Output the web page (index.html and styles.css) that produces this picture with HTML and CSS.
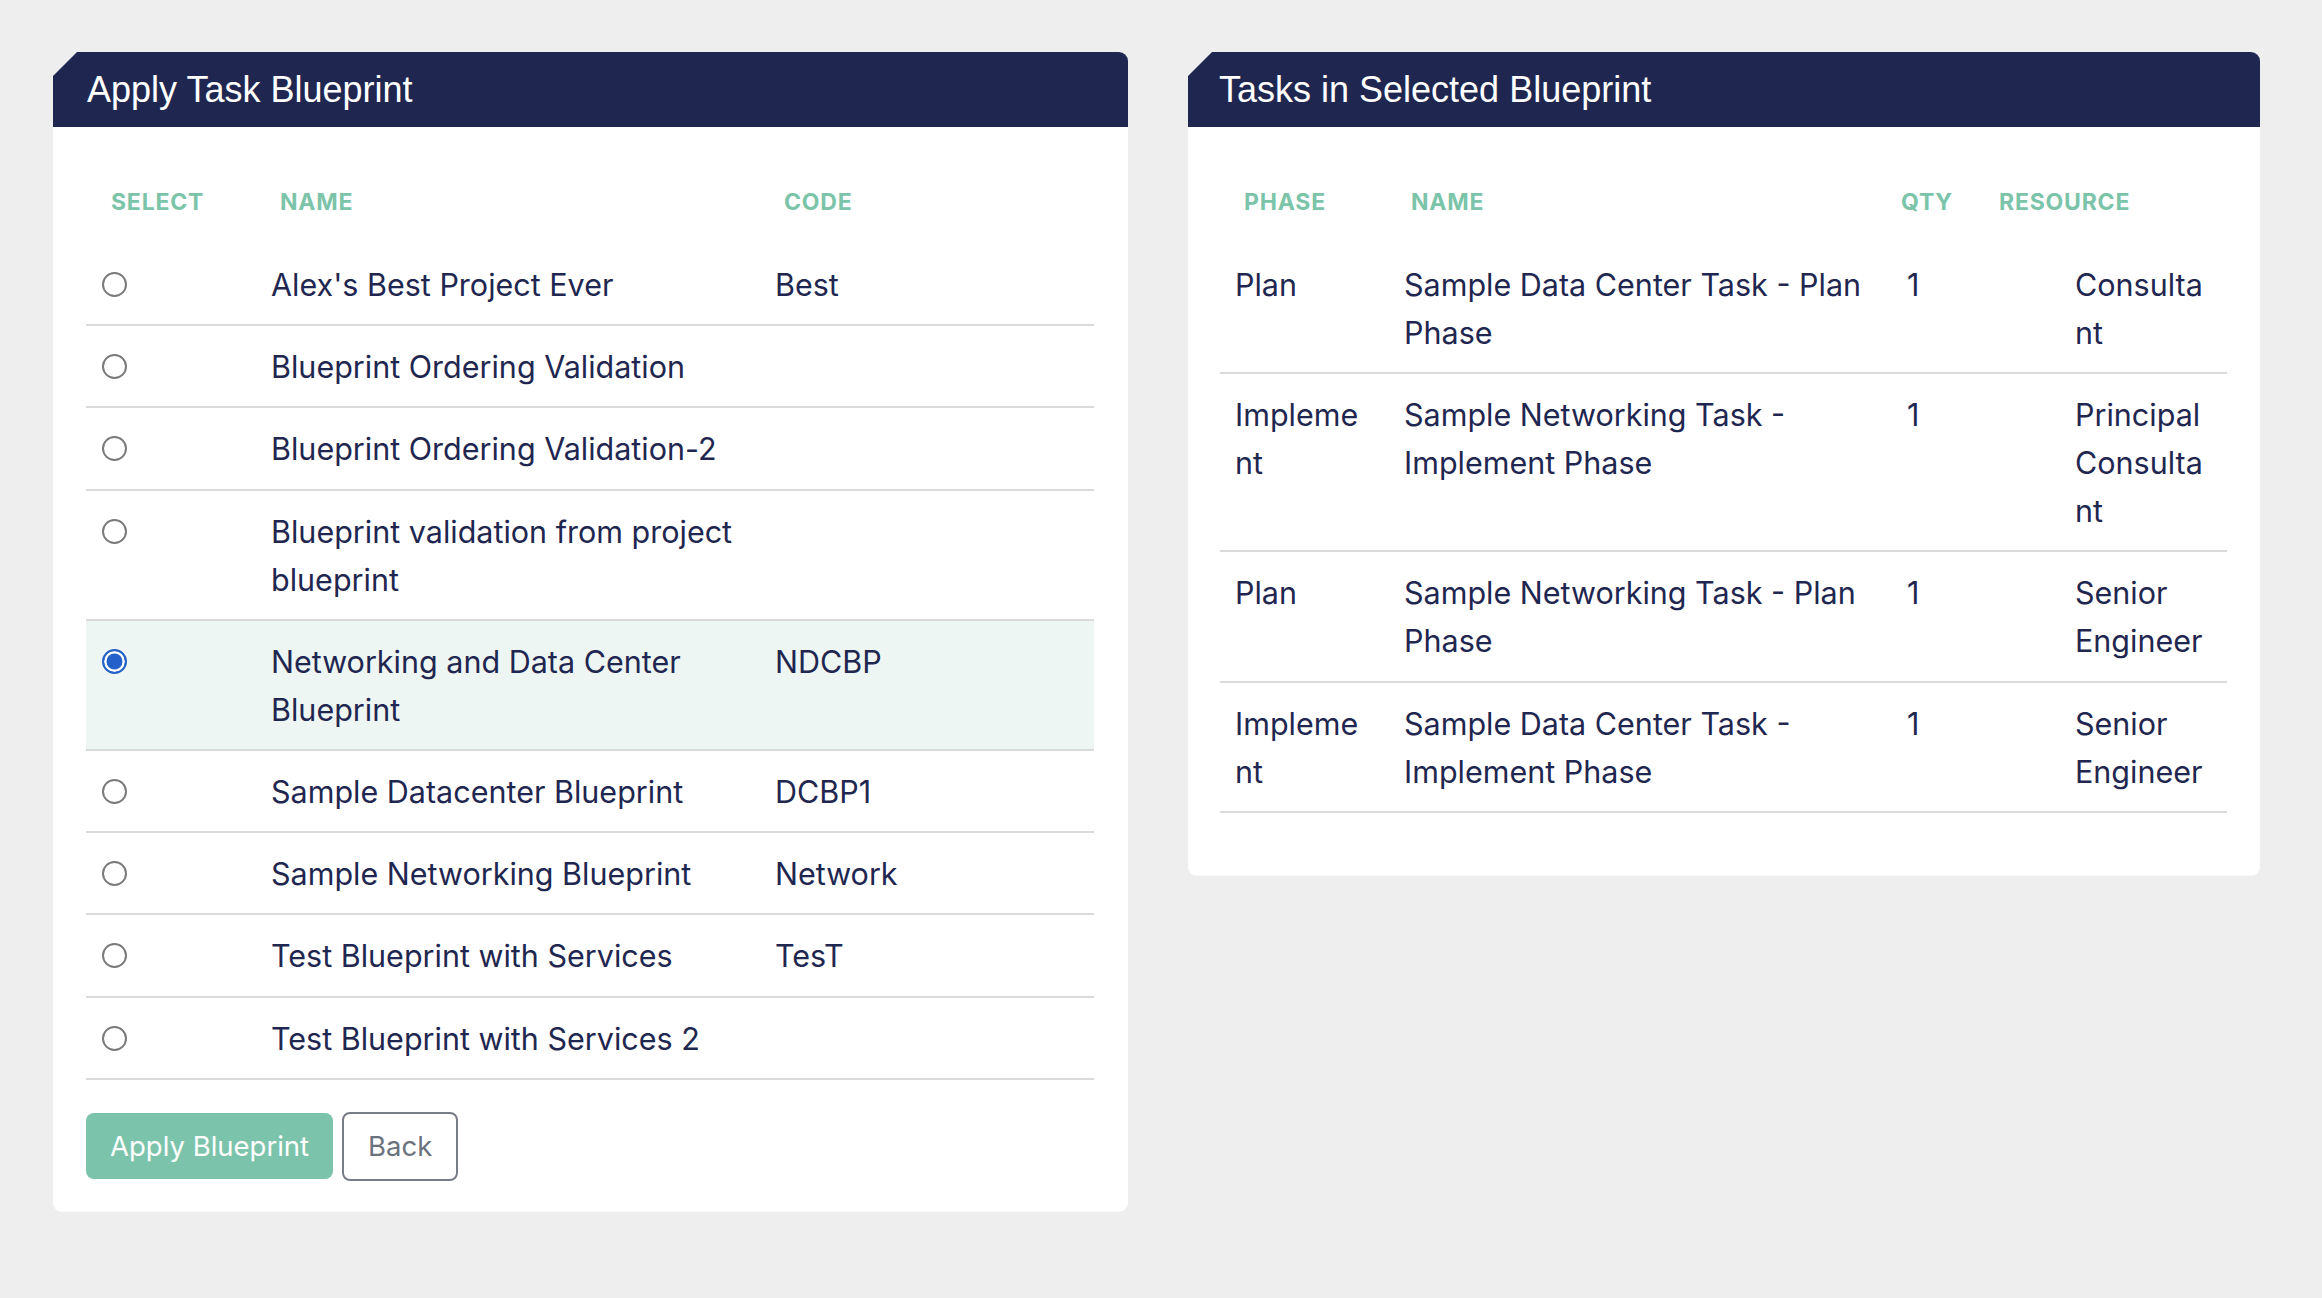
FILE: index.html
```html
<!DOCTYPE html>
<html>
<head>
	<meta charset="UTF-8">
	<title>Apply Task Blueprint</title>
	<link rel="stylesheet" href="styles.css">
</head>
<body>
	<div class="page">
		<!-- Blueprint picker -->
		<section class="card card-left">
			<h2 class="card-header">Apply Task Blueprint</h2>
			<div class="card-body">
				<div class="bp-row head">
					<div class="cell">Select</div>
					<div class="cell">Name</div>
					<div class="cell">Code</div>
				</div>
				<label class="bp-row">
					<div class="cell"><input type="radio" name="bp"></div>
					<div class="cell">Alex's Best Project Ever</div>
					<div class="cell">Best</div>
				</label>
				<label class="bp-row">
					<div class="cell"><input type="radio" name="bp"></div>
					<div class="cell">Blueprint Ordering Validation</div>
					<div class="cell"></div>
				</label>
				<label class="bp-row">
					<div class="cell"><input type="radio" name="bp"></div>
					<div class="cell">Blueprint Ordering Validation-2</div>
					<div class="cell"></div>
				</label>
				<label class="bp-row">
					<div class="cell"><input type="radio" name="bp"></div>
					<div class="cell">Blueprint validation from project blueprint</div>
					<div class="cell"></div>
				</label>
				<label class="bp-row selected">
					<div class="cell"><input type="radio" name="bp" checked></div>
					<div class="cell">Networking and Data Center Blueprint</div>
					<div class="cell">NDCBP</div>
				</label>
				<label class="bp-row">
					<div class="cell"><input type="radio" name="bp"></div>
					<div class="cell">Sample Datacenter Blueprint</div>
					<div class="cell">DCBP1</div>
				</label>
				<label class="bp-row">
					<div class="cell"><input type="radio" name="bp"></div>
					<div class="cell">Sample Networking Blueprint</div>
					<div class="cell">Network</div>
				</label>
				<label class="bp-row">
					<div class="cell"><input type="radio" name="bp"></div>
					<div class="cell">Test Blueprint with Services</div>
					<div class="cell">TesT</div>
				</label>
				<label class="bp-row">
					<div class="cell"><input type="radio" name="bp"></div>
					<div class="cell">Test Blueprint with Services 2</div>
					<div class="cell"></div>
				</label>
				<div class="actions">
					<button class="btn btn-apply">Apply Blueprint</button>
					<button class="btn btn-back">Back</button>
				</div>
			</div>
		</section>

		<!-- Tasks of the selected blueprint -->
		<section class="card card-right">
			<h2 class="card-header">Tasks in Selected Blueprint</h2>
			<div class="card-body">
				<div class="task-row head">
					<div class="cell">Phase</div>
					<div class="cell">Name</div>
					<div class="cell">Qty</div>
					<div class="cell">Resource</div>
				</div>
				<div class="task-row">
					<div class="cell">Plan</div>
					<div class="cell">Sample Data Center Task - Plan Phase</div>
					<div class="cell">1</div>
					<div class="cell">Consultant</div>
				</div>
				<div class="task-row">
					<div class="cell">Implement</div>
					<div class="cell">Sample Networking Task - Implement Phase</div>
					<div class="cell">1</div>
					<div class="cell">Principal Consultant</div>
				</div>
				<div class="task-row">
					<div class="cell">Plan</div>
					<div class="cell">Sample Networking Task - Plan Phase</div>
					<div class="cell">1</div>
					<div class="cell">Senior Engineer</div>
				</div>
				<div class="task-row">
					<div class="cell">Implement</div>
					<div class="cell">Sample Data Center Task - Implement Phase</div>
					<div class="cell">1</div>
					<div class="cell">Senior Engineer</div>
				</div>
			</div>
		</section>
	</div>
</body>
</html>
```

FILE: styles.css
```css
/* Basic styles */
body {
	margin: 0;
	background-color: #eeeeee;
	font-family: Inter, "Noto Sans", sans-serif;
	color: #1f2750;
}
.page {
	display: flex;
	align-items: flex-start;
	gap: 60px;
	padding: 52px 0 0 53px;
}

/* Cards */
.card {
	background-color: #fff;
	border-radius: 9px;
	clip-path: polygon(24px 0, 100% 0, 100% 100%, 0 100%, 0 24px);
	overflow: hidden;
}
.card-left {
	width: 1075px;
}
.card-right {
	width: 1072px;
}
.card-header {
	margin: 0;
	height: 75px;
	line-height: 75px;
	background-color: #1f2751;
	color: #fff;
	font-family: "Liberation Sans", Arial, sans-serif;
	font-weight: normal;
	font-size: 36px;
}
.card-left .card-header {
	padding-left: 34px;
}
.card-right .card-header {
	padding-left: 31px;
}
.card-body {
	padding: 32px 34px 31px 33px;
}
.card-right .card-body {
	padding: 32px 33px 63px 32px;
}

/* Rows */
.bp-row,
.task-row {
	display: grid;
	font-size: 30.5px;
	line-height: 48px;
	border-bottom: 2px solid #dadada;
}
.bp-row {
	grid-template-columns: 169px 504px 1fr;
	cursor: pointer;
}
.task-row {
	grid-template-columns: 169px 503px 168px 1fr;
}
.cell {
	padding: 17px 16px 15.2px 15px;
	overflow-wrap: anywhere;
}
.bp-row .cell {
	padding-left: 16px;
}
.task-row .cell:first-child {
	padding-right: 22px;
}
.bp-row.selected {
	background-color: #eef6f3;
}
.bp-row input {
	appearance: none;
	box-sizing: border-box;
	width: 25px;
	height: 25px;
	margin: 11px 0 0 0;
	vertical-align: top;
	border: 2px solid #7a7a7a;
	border-radius: 50%;
	background-color: #fff;
	cursor: pointer;
}
.bp-row input:checked {
	border: 2.5px solid #2460c9;
	background-color: #2460c9;
	box-shadow: inset 0 0 0 2.5px #fff;
}

/* Table heads */
.head {
	height: 85px;
	border-bottom: none;
	align-items: center;
	cursor: default;
}
.head .cell {
	padding: 0 0 0 25px;
	font-size: 23px;
	line-height: 30px;
	font-weight: bold;
	letter-spacing: 0.8px;
	text-transform: uppercase;
	color: #7bc4a9;
}
.task-row.head {
	grid-template-columns: 167px 490px 98px 1fr;
}
.task-row.head .cell {
	padding-left: 24px;
}

/* Buttons */
.actions {
	display: flex;
	align-items: center;
	gap: 9px;
	margin-top: 32px;
}
.btn {
	font-family: Inter, "Noto Sans", sans-serif;
	font-size: 27.5px;
	border-radius: 8px;
	cursor: pointer;
}
.btn-apply {
	height: 66px;
	padding: 0 24px;
	background-color: #7bc4ab;
	border: none;
	color: #fff;
}
.btn-back {
	height: 69px;
	padding: 0 24px;
	background-color: #fff;
	border: 2px solid #777c86;
	color: #6c727d;
}
```
